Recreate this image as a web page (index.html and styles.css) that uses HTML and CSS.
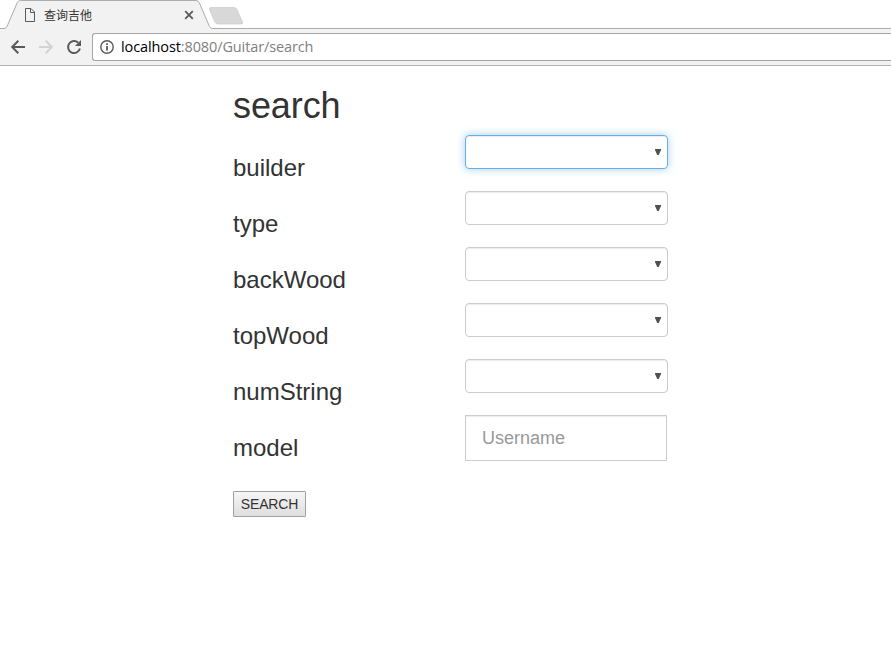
FILE: index.html
```html
<!DOCTYPE html>
<html lang="zh">
<head>
<meta charset="utf-8">
<title>查询吉他</title>
<link rel="stylesheet" href="styles.css">
</head>
<body>
<header class="browser">
  <div class="tabstrip">
    <svg class="tab-shapes" width="260" height="29" viewBox="0 0 260 29" aria-hidden="true">
      <path d="M0 28.5H4Q6 28.5 7 26.5L17.300 2.500Q18.200 .5 20.500 .5H196Q198.300 .5 199.200 2.500L209.500 26.500Q210.500 28.500 212.500 28.500V29H0Z" fill="#f2f2f2"/>
      <path d="M0 28.500H4Q6 28.500 7 26.500L17.300 2.500Q18.200 .5 20.500 .5H196Q198.300 .5 199.200 2.500L209.500 26.500Q210.500 28.500 212.500 28.500H260" fill="none" stroke="#acacac"/>
      <path d="M211 7.500H234Q236 7.500 237 9.500L242.500 22Q243.300 24 241 24H218Q215.800 24 214.800 22L209.500 9.500Q208.800 7.500 211 7.500Z" fill="#d8d8d8" stroke="#cbcbcb" stroke-width=".7"/>
    </svg>
    <div class="tab">
      <svg width="12" height="14" viewBox="0 0 12 14" fill="none" stroke="#5a5a5a"><path d="M1.500 .5H7L10.500 4V13.500H1.500ZM6.500 .5V4.500H10.500"/></svg>
      <span class="tab-title">查询吉他</span>
      <svg width="10" height="10" viewBox="0 0 10 10" stroke="#5a5a5a" stroke-width="1.800"><path d="M1.200 1.200L8.800 8.800M8.800 1.200L1.200 8.800"/></svg>
    </div>
  </div>
  <div class="toolbar">
    <svg class="nav" width="16" height="16" viewBox="0 0 16 16" fill="none" stroke="#5a5a5a" stroke-width="2"><path d="M15 8H2.500M8.300 1.800L2.200 8L8.300 14.200"/></svg>
    <svg class="nav" width="16" height="16" viewBox="0 0 16 16" fill="none" stroke="#d3d3d3" stroke-width="2"><path d="M1 8H13.500M7.700 1.800L13.800 8L7.700 14.200"/></svg>
    <svg class="nav" width="16" height="16" viewBox="0 0 16 16" fill="none" stroke="#5a5a5a" stroke-width="2"><path d="M13.900 9.500A6 6 0 1 1 12.200 3.700"/><path d="M15 1V7H9Z" fill="#5a5a5a" stroke="none"/></svg>
    <div class="address">
      <svg width="14" height="14" viewBox="0 0 14 14" fill="none" stroke="#5a5a5a"><circle cx="7" cy="7" r="6.200" stroke-width="1.400"/><path d="M7 6V10.500M7 3.300V5" stroke-width="1.800"/></svg>
      <span class="url"><b>localhost</b>:8080/Guitar/search</span>
    </div>
  </div>
</header>
<main class="page">
  <h1>search</h1>
  <form>
    <div class="row"><h3>builder</h3><div class="select focused"></div></div>
    <div class="row"><h3>type</h3><div class="select"></div></div>
    <div class="row"><h3>backWood</h3><div class="select"></div></div>
    <div class="row"><h3>topWood</h3><div class="select"></div></div>
    <div class="row"><h3>numString</h3><div class="select"></div></div>
    <div class="row"><h3>model</h3><input class="model" type="text" placeholder="Username"></div>
    <button class="submit" type="button">SEARCH</button>
  </form>
</main>
</body>
</html>
```
FILE: styles.css
```css
* { box-sizing: border-box; }
body {
  margin: 0;
  background: #fff;
  color: #333;
  font-family: "Liberation Sans", Arial, sans-serif;
  overflow: hidden;
}
svg { display: block; flex: none; }
.browser { height: 66px; }
.tabstrip {
  position: relative;
  height: 29px;
  border-bottom: 1px solid #acacac;
}
.tab-shapes { position: absolute; left: 0; top: 0; }
.tab {
  position: relative;
  display: flex;
  align-items: center;
  width: 194px;
  height: 30px;
  padding-left: 24px;
}
.tab-title {
  flex: 1;
  margin-left: 8px;
  font: 12px/16px "Noto Sans CJK SC", sans-serif;
}
.toolbar {
  display: flex;
  align-items: center;
  height: 37px;
  padding-left: 10px;
  background: #f2f2f2;
  border-bottom: 1px solid #b3b3b3;
}
.nav { margin-right: 12px; }
.address {
  display: flex;
  align-items: center;
  flex: 1;
  height: 28px;
  margin-left: -2px;
  padding-left: 7px;
  background: #fff;
  border: 1px solid #a6a6a6;
  border-right: 0;
  border-radius: 3px 0 0 3px;
}
.url {
  margin-left: 7px;
  color: #808080;
  font: 14.500px/20px "Open Sans", sans-serif;
  letter-spacing: -.11px;
}
.url b { color: #000; font-weight: 400; }
.page { width: 435px; margin-left: 233px; }
h1 {
  margin: 20px 0 9px;
  font-size: 36px;
  font-weight: 400;
  line-height: 40px;
  letter-spacing: -.1px;
}
.row {
  display: grid;
  grid-template-columns: 232px 203px;
  align-items: start;
  height: 56px;
}
h3 {
  margin: 20px 0 0;
  font-size: 24px;
  font-weight: 400;
  line-height: 26px;
}
.select {
  display: flex;
  align-items: center;
  justify-content: flex-end;
  height: 34px;
  padding-right: 6px;
  border: 1px solid #ccc;
  border-radius: 4px;
  box-shadow: inset 0 1px 1px rgba(0, 0, 0, .075);
}
.select::after {
  content: "";
  width: 6px;
  height: 6px;
  background: #505050;
  clip-path: polygon(0 0, 100% 0, 100% 15%, 62% 100%, 38% 100%, 0 15%);
}
.focused {
  border-color: #66afe9;
  box-shadow: inset 0 1px 1px rgba(0, 0, 0, .075), 0 0 8px rgba(102, 175, 233, .6);
}
.model {
  width: 202px;
  height: 46px;
  padding: 10px 16px;
  border: 1px solid #ccc;
  border-radius: 0;
  box-shadow: inset 0 1px 1px rgba(0, 0, 0, .075);
  font: 18px/24px "Liberation Sans", Arial, sans-serif;
}
.model::placeholder { color: #999; opacity: 1; }
.submit {
  display: block;
  width: 73px;
  height: 26px;
  margin-top: 20px;
  padding: 0;
  border: 1px solid #a0a0a0;
  border-radius: 1px;
  background: linear-gradient(#f6f6f6, #dedede);
  color: #333;
  font: 14px/20px "Liberation Sans", Arial, sans-serif;
  letter-spacing: -.15px;
}
```
